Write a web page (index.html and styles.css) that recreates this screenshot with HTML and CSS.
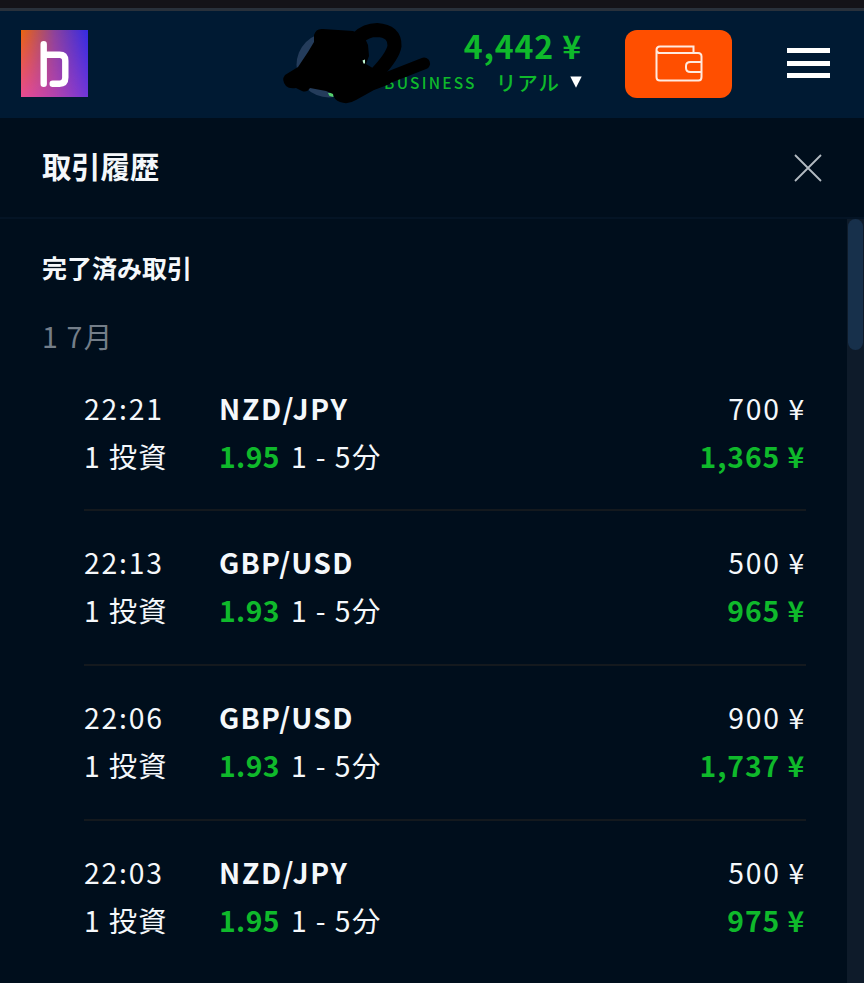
FILE: index.html
```html
<!DOCTYPE html>
<html lang="ja">
<head>
<meta charset="utf-8">
<title>取引履歴</title>
<link rel="stylesheet" href="styles.css">
</head>
<body>
<div class="status-strip"></div>
<header class="topbar">
  <svg class="logo" viewBox="0 0 67 67">
    <defs>
      <linearGradient id="lg" x1="0" y1="0" x2="1" y2="0"><stop offset="0" stop-color="#ed650f"/><stop offset=".5" stop-color="#8c429b"/><stop offset="1" stop-color="#342be5"/></linearGradient>
      <linearGradient id="lo" x1="0" y1="0" x2="1" y2="0"><stop offset="0" stop-color="#e94b92"/><stop offset=".5" stop-color="#b443ad"/><stop offset="1" stop-color="#7036d8"/></linearGradient>
      <linearGradient id="fade" x1="0" y1="0" x2="0" y2="1"><stop offset="0" stop-color="#000"/><stop offset="1" stop-color="#fff"/></linearGradient>
      <mask id="m"><rect width="67" height="67" fill="url(#fade)"/></mask>
    </defs>
    <rect width="67" height="67" fill="url(#lg)"/>
    <rect width="67" height="67" fill="url(#lo)" mask="url(#m)"/>
    <path d="M22.7 14.2V53.7M23 24.8H38.5Q44.3 24.8 44.3 30.8V47.5Q44.3 53.7 38.5 53.7H31.7" fill="none" stroke="#fff" stroke-width="6.4" stroke-linecap="round"/>
  </svg>
  <div class="account">
    <div class="balance">4,442 ¥</div>
    <div class="plan-line"><span class="plan">BUSINESS</span><span class="mode">リアル</span><svg class="caret" viewBox="0 0 12 12"><path d="M.3.5H11.7L6 11.7Z" fill="#fff"/></svg></div>
    <svg class="scribble" viewBox="0 0 160 90">
      <circle cx="51" cy="47" r="32.5" fill="#243c5b"/>
      <path d="M50 75h5.500v4l-4-1z" fill="#55d06c"/>
      <path d="M36 17Q38 10 45 11L75 13L86 18L90 27L91 38L88 46L98 52L116 56L112 66L96 72L78 82Q70 87 62 84Q56 82 55 76L48 73L32 70Q29 75 24 73L18 70Q11 71 8 68Q3 62 7 57L20 49L30 34L36 24Z" fill="#000"/>
      <path d="M80 20Q88 12 99 12Q117 13 116.500 28Q115 38 98 56" fill="none" stroke="#000" stroke-width="14"/>
      <path d="M72 74L109 60L146 45.500" fill="none" stroke="#000" stroke-width="12" stroke-linecap="round"/>
      <path d="M84.500 42.500l2.500-1v4h-1.500z" fill="#bff5d0"/>
    </svg>
  </div>
  <button class="wallet" aria-label="財布"><svg viewBox="0 0 48 38" fill="none" stroke="#ffeadf" stroke-width="2"><path d="M38.500 8V1.500H5Q1.500 1.500 1.500 5V32Q1.500 35.500 5 35.500H43.500Q46.500 35.500 46.500 32V11.500Q46.500 8 43 8H3.500L2 6"/><path d="M46.500 17H35.500Q31 17 31 21V23Q31 27 35.500 27H46.500"/></svg></button>
  <div class="menu"><i></i><i></i><i></i></div>
</header>
<section class="panel-head">
  <h1>取引履歴</h1>
  <svg class="close" viewBox="0 0 28 28"><path d="M1 1L27 27M27 1L1 27" stroke="#b3bbc2" stroke-width="1.8"/></svg>
</section>
<main class="body">
  <div class="content">
    <h2>完了済み取引</h2>
    <div class="date"><span>1</span><span>7月</span></div>
    <div class="trade">
      <div class="line"><span class="time">22:21</span><b class="pair">NZD/JPY</b><span class="amount">700 ¥</span></div>
      <div class="line"><span class="count">1 投資</span><b class="rate">1.95</b><span class="term">1 - 5分</span><b class="payout">1,365 ¥</b></div>
    </div>
    <div class="trade">
      <div class="line"><span class="time">22:13</span><b class="pair usd">GBP/USD</b><span class="amount">500 ¥</span></div>
      <div class="line"><span class="count">1 投資</span><b class="rate">1.93</b><span class="term">1 - 5分</span><b class="payout">965 ¥</b></div>
    </div>
    <div class="trade">
      <div class="line"><span class="time">22:06</span><b class="pair usd">GBP/USD</b><span class="amount">900 ¥</span></div>
      <div class="line"><span class="count">1 投資</span><b class="rate">1.93</b><span class="term">1 - 5分</span><b class="payout">1,737 ¥</b></div>
    </div>
    <div class="trade">
      <div class="line"><span class="time">22:03</span><b class="pair">NZD/JPY</b><span class="amount">500 ¥</span></div>
      <div class="line"><span class="count">1 投資</span><b class="rate">1.95</b><span class="term">1 - 5分</span><b class="payout">975 ¥</b></div>
    </div>
  </div>
  <div class="track"><div class="thumb"></div></div>
</main>
</body>
</html>
```
FILE: styles.css
```css
* { box-sizing: border-box; }
body {
  margin: 0;
  height: 983px;
  overflow: hidden;
  display: flex;
  flex-direction: column;
  background: #000e1c;
  color: #f5f8fb;
  font-family: "Noto Sans CJK JP", sans-serif;
}
.status-strip { flex: none; height: 11px; background: #141318; border-bottom: 3px solid #29313b; }
.topbar {
  flex: none;
  height: 107px;
  display: flex;
  align-items: flex-start;
  padding: 19px 34px 0 21px;
  background: #001a33;
}
.logo { width: 67px; height: 67px; }
.account { position: relative; width: 494px; height: 80px; color: #0fb92b; }
.balance { height: 37px; line-height: 30px; text-align: right; font-weight: 700; font-size: 32px; letter-spacing: .9px; }
.plan-line { display: flex; justify-content: flex-end; align-items: center; height: 30px; }
.plan { font-size: 15.5px; font-weight: 500; letter-spacing: 2.2px; margin-right: 19px; }
.mode { font-size: 20.5px; font-weight: 500; letter-spacing: 1px; margin-right: 10px; }
.caret { width: 12px; height: 12px; }
.scribble { position: absolute; left: 190px; top: -12px; width: 160px; height: 90px; }
.wallet {
  width: 107px;
  height: 68px;
  margin-left: 43px;
  padding: 0;
  border: 0;
  border-radius: 12px;
  background: #ff4f00;
  display: flex;
  align-items: center;
  justify-content: center;
}
.wallet svg { width: 48px; height: 38px; }
.menu { margin: 18px 0 0 auto; width: 43px; height: 30px; display: flex; flex-direction: column; justify-content: space-between; }
.menu i { height: 5px; background: #fff; }
.panel-head {
  flex: none;
  height: 101px;
  padding: 0 42px;
  display: flex;
  justify-content: space-between;
  align-items: center;
  border-bottom: 2px solid #041425;
}
h1 { margin: 0; padding-bottom: 6px; font-size: 29.3px; line-height: 40px; font-weight: 700; }
.close { width: 28px; height: 28px; }
.body { flex: 1; min-height: 0; display: flex; }
.content { flex: 1; padding: 28px 41px 0 42px; }
h2 { margin: 0; font-size: 25px; line-height: 40px; font-weight: 700; }
.date { display: flex; gap: 7px; margin-top: 27px; height: 43px; line-height: 43px; font-size: 28.5px; color: #747e89; letter-spacing: 1.6px; }
.trade { margin-left: 42px; height: 154.7px; padding-top: 27px; border-bottom: 2px solid #14191e; }
.date + .trade { margin-top: -.5px; }
.trade:last-child { border: 0; }
.line { display: flex; height: 48px; line-height: 48px; font-size: 28.3px; white-space: pre; }
.time, .count { width: 135px; letter-spacing: 1.8px; }
.count { letter-spacing: 1.3px; }
.pair { letter-spacing: 1.7px; }
.pair.usd { letter-spacing: 1.2px; }
.rate { width: 72px; color: #0fb92b; letter-spacing: .4px; }
.term { letter-spacing: 1.4px; }
.amount, .payout { margin-left: auto; letter-spacing: 1.7px; }
.payout { margin-right: 1px; color: #0fb92b; letter-spacing: .9px; }
.track { width: 17px; padding: 0 1px; background: #0e1b2a; }
.thumb { height: 131px; border-radius: 8px; background: #17304b; }
```
